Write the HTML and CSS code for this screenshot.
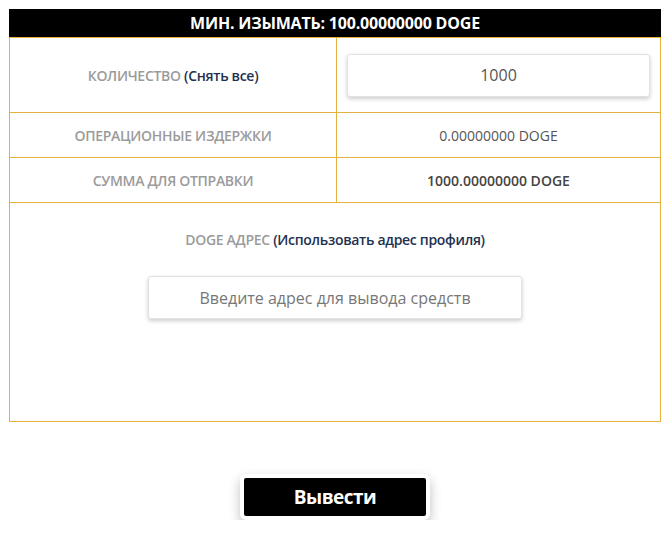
FILE: index.html
```html
<!DOCTYPE html>
<html lang="ru">
<head>
    <meta charset="UTF-8">
    <meta name="viewport" content="width=device-width, initial-scale=1.0">
    <title>Вывод DOGE</title>
    <link rel="stylesheet" href="styles.css">
</head>
<body>

    <div class="withdraw">
        <div class="withdraw-head">МИН. ИЗЫМАТЬ: 100.00000000 DOGE</div>

        <div class="withdraw-table">
            <div class="row row-amount">
                <div class="cell label">КОЛИЧЕСТВО&nbsp;<a class="link" href="#">(Снять все)</a></div>
                <div class="cell">
                    <input class="field field-amount" type="text" value="1000">
                </div>
            </div>
            <div class="row">
                <div class="cell label">ОПЕРАЦИОННЫЕ ИЗДЕРЖКИ</div>
                <div class="cell value">0.00000000 DOGE</div>
            </div>
            <div class="row">
                <div class="cell label">СУММА ДЛЯ ОТПРАВКИ</div>
                <div class="cell value value-total">1000.00000000 DOGE</div>
            </div>
            <div class="address">
                <div class="label">DOGE АДРЕС <a class="link" href="#">(Использовать адрес профиля)</a></div>
                <input class="field field-address" type="text" placeholder="Введите адрес для вывода средств">
            </div>
        </div>

        <div class="actions">
            <button class="btn" type="button">Вывести</button>
        </div>
    </div>

</body>
</html>
```

FILE: styles.css
```css
:root {
    --gold: #e3b23c;
    --label: #9b9b9b;
    --link: #1f3150;
    --text: #555;
}

* {
    margin: 0;
    padding: 0;
    box-sizing: border-box;
    font-family: 'Open Sans', sans-serif;
}

body {
    background-color: #fff;
    padding: 9px 10px 0 9px;
}

.withdraw-head {
    background-color: #000;
    color: #fff;
    height: 28px;
    line-height: 28px;
    text-align: center;
    font-size: 16px;
    font-weight: 700;
    letter-spacing: -0.2px;
}

.withdraw-table {
    border: 1px solid var(--gold);
    border-top: none;
}

.row {
    display: grid;
    grid-template-columns: 326px 1fr;
    height: 45px;
    border-top: 1px solid var(--gold);
}

.row-amount {
    height: 75px;
}

.cell {
    display: flex;
    align-items: center;
    justify-content: center;
}

.cell + .cell {
    border-left: 1px solid var(--gold);
    padding: 0 10px;
}

.label {
    color: var(--label);
    font-size: 14px;
    font-weight: 600;
    letter-spacing: -0.3px;
    text-align: center;
}

.link {
    color: var(--link);
    text-decoration: none;
}

.value {
    color: var(--text);
    font-size: 14px;
}

.value-total {
    font-weight: 600;
    color: #444;
}

.field {
    height: 43px;
    border: 1px solid #e2e2e2;
    border-radius: 3px;
    background-color: #fff;
    box-shadow: 0 2px 4px rgba(0, 0, 0, 0.2);
    font-size: 16px;
    color: #555;
    text-align: center;
    outline: none;
}

.field-amount {
    width: 100%;
}

.field::placeholder {
    color: #777;
}

.address {
    border-top: 1px solid var(--gold);
    height: 219px;
    display: flex;
    flex-direction: column;
    align-items: center;
    padding-top: 27px;
}

.field-address {
    width: 374px;
    margin-top: 27px;
}

.actions {
    display: flex;
    justify-content: center;
    padding-top: 52px;
}

.btn {
    width: 190px;
    height: 46px;
    background-color: #000;
    color: #fff;
    border: 4px solid #fff;
    border-radius: 6px;
    box-shadow: 0 5px 12px rgba(0, 0, 0, 0.25);
    font-size: 19px;
    font-weight: 700;
    letter-spacing: -0.5px;
    cursor: pointer;
}
```
